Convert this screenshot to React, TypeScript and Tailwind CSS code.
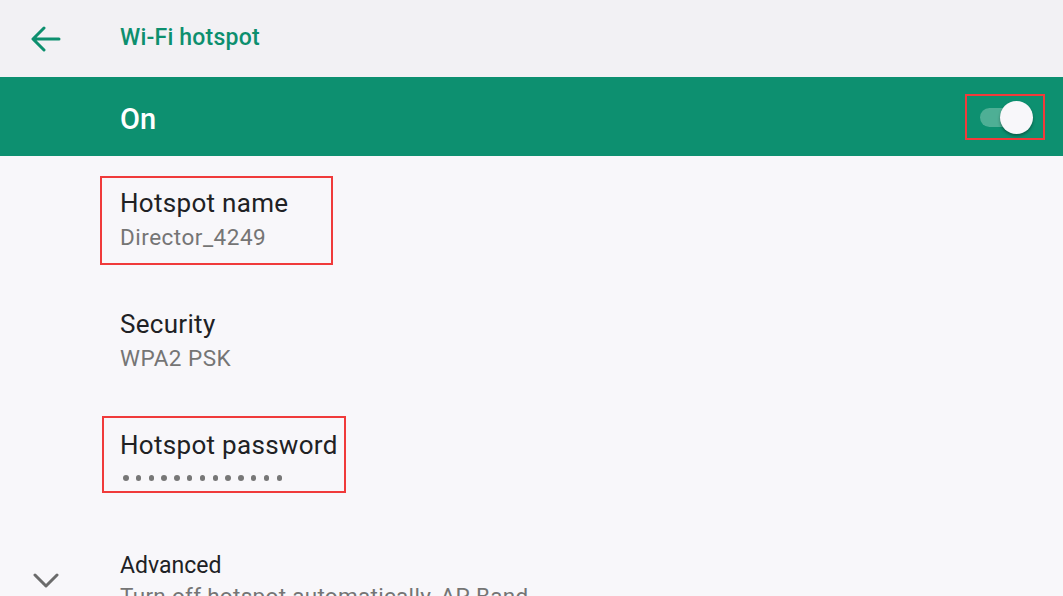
import React from "react";

const title = "text-[26px] leading-[30px] tracking-[0.3px] text-[#202124]";
const sub = "text-[22.5px] leading-[26px] tracking-[0.5px] text-[#757575]";

export default function App() {
  return (
    <div className="w-[1063px] h-[596px] overflow-hidden bg-[#f8f7fa] font-['Roboto',sans-serif]">
      <div className="h-[77px] bg-[#f2f1f4] flex items-center">
        <div className="w-[92px] flex justify-center">
          <svg width="30" height="26" viewBox="0 0 30 26" fill="none" stroke="#0d8f6e" strokeWidth="3" strokeLinecap="round" strokeLinejoin="round">
            <path d="M28 13H3M13 2L2 13l11 11" />
          </svg>
        </div>
        <div className="ml-[28px] text-[23px] font-medium tracking-[0.2px] text-[#0d8f6e] mt-[-1px]">Wi-Fi hotspot</div>
      </div>
      <div className="h-[79px] bg-[#0d9070] flex items-center pl-[120px] pr-[18px]">
        <div className="text-[29px] font-medium text-white flex-1 mt-[6px]">On</div>
        <div className="relative w-[80px] h-[46px] border-2 border-[#f23b3b]">
          <div className="absolute left-[13px] top-[12px] w-[45px] h-[19px] rounded-full bg-[#5fb69f] opacity-80" />
          <div className="absolute left-[33px] top-[5px] w-[33px] h-[33px] rounded-full bg-[#f8f7fa] shadow-[0_2px_3px_rgba(0,0,0,0.35)]" />
        </div>
      </div>
      <div className="flex flex-col">
        <div className="h-[121px] pl-[100px] pt-[20px]">
          <div className="w-[233px] h-[89px] border-2 border-[#f03a3a] pl-[18px] pt-[10px]">
            <div className={title}>Hotspot name</div>
            <div className={`${sub} mt-[6px]`}>Director_4249</div>
          </div>
        </div>
        <div className="h-[120px] pl-[120px] pt-[32px]">
          <div className={title}>Security</div>
          <div className={`${sub} mt-[6px]`}>WPA2 PSK</div>
        </div>
        <div className="h-[121px] pl-[102px] pt-[19px]">
          <div className="w-[244px] h-[77px] border-2 border-[#f03a3a] pl-[16px] pt-[12px]">
            <div className={title}>Hotspot password</div>
            <div className="flex gap-[7.3px] mt-[15px] pl-[3px] items-center">
              {Array.from({ length: 13 }).map((_, i) => (
                <span key={i} className="block w-[5.5px] h-[5.5px] rounded-full bg-[#777777]" />
              ))}
            </div>
          </div>
        </div>
        <div className="flex items-start pt-[34px]">
          <div className="w-[92px] flex justify-center pt-[20px]">
            <svg width="26" height="16" viewBox="0 0 26 16" fill="none" stroke="#6b6b6b" strokeWidth="3" strokeLinecap="round" strokeLinejoin="round">
              <path d="M2 3l11 11L24 3" />
            </svg>
          </div>
          <div className="ml-[28px]">
            <div className="text-[23px] leading-[28px] text-[#202124]">Advanced</div>
            <div className="text-[22.5px] leading-[26px] tracking-[0.3px] text-[#757575] mt-[3px] whitespace-nowrap">Turn off hotspot automatically, AP Band</div>
          </div>
        </div>
      </div>
    </div>
  );
}
